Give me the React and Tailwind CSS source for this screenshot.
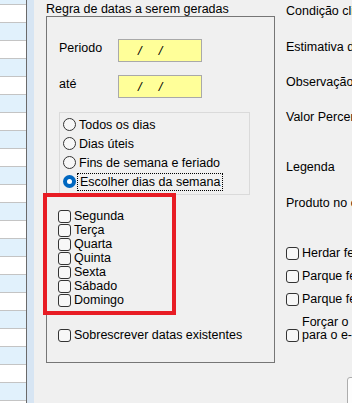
import React from "react";

function Radio({ checked }) {
  if (checked) {
    return (
      <span className="w-[13px] h-[13px] rounded-full bg-[#0067c0] flex items-center justify-center shrink-0">
        <span className="w-[5px] h-[5px] rounded-full bg-white" />
      </span>
    );
  }
  return <span className="w-[13px] h-[13px] rounded-full border border-[#333333] bg-[#f7f7f7] shrink-0" />;
}

function Check() {
  return <span className="w-[13px] h-[13px] rounded-[3px] border border-[#333333] bg-[#f7f7f7] shrink-0" />;
}

export default function App() {
  const rows = [];
  rows.push({ h: 4, blue: true });
  for (let i = 0; i < 23; i++) rows.push({ h: 17, blue: i % 2 === 1 });
  const days = ["Segunda", "Terça", "Quarta", "Quinta", "Sexta", "Sábado", "Domingo"];
  const radios = [
    ["Todos os dias", false],
    ["Dias úteis", false],
    ["Fins de semana e feriado", false],
    ["Escolher dias da semana", true],
  ];
  return (
    <div className="relative w-[352px] h-[403px] overflow-hidden flex bg-[#f0f0f0] text-black text-[12.5px] leading-[14px] font-['Liberation_Sans',Arial,sans-serif]">
      {/* left grid strip */}
      <div className="w-[26px] flex flex-col shrink-0">
        {rows.map((r, i) => (
          <div key={i} className="flex flex-col shrink-0">
            <div className={r.blue ? "bg-[#e1f1fc]" : "bg-white"} style={{ height: r.h }} />
            <div className="h-px bg-[#c4c4c4]" />
          </div>
        ))}
      </div>
      <div className="w-px bg-[#6a6a6a] shrink-0" />
      <div className="w-[7px] bg-[#d7e5f3] shrink-0" />

      {/* main panel */}
      <div className="flex pl-[12px]">
        {/* group */}
        <div className="w-[229px] shrink-0 flex flex-col">
          <div className="h-[16px] pt-[2px] whitespace-nowrap">Regra de datas a serem geradas</div>
          <div className="h-[347px] border border-[#767676] flex flex-col pl-[12px]">
            <div className="mt-[22px] h-[23px] flex items-start">
              <span className="w-[59px] mt-[2px]">Periodo</span>
              <div className="w-[84px] h-[23px] border border-[#a9a9a9] bg-[#ffff99] flex items-center text-[13px]">
                <span className="ml-[19px] italic">/</span>
                <span className="ml-[17px] italic">/</span>
              </div>
            </div>
            <div className="mt-[13px] h-[23px] flex items-start">
              <span className="w-[59px] mt-[2px]">até</span>
              <div className="w-[84px] h-[23px] border border-[#a9a9a9] bg-[#ffff99] flex items-center text-[13px]">
                <span className="ml-[19px] italic">/</span>
                <span className="ml-[17px] italic">/</span>
              </div>
            </div>
            <div className="mt-[14px] w-[191px] h-[83px] border border-[#dadada] pt-[2px] pl-[3px] flex flex-col">
              {radios.map(([label, checked]) => (
                <div key={label} className="h-[19px] flex items-center">
                  <Radio checked={checked} />
                  {checked ? (
                    <span className="ml-px px-[2px] border border-dotted border-black leading-[16px] whitespace-nowrap">{label}</span>
                  ) : (
                    <span className="ml-[3px] whitespace-nowrap">{label}</span>
                  )}
                </div>
              ))}
            </div>
            <div className="mt-[14px] flex flex-col -ml-px">
              {days.map((d) => (
                <div key={d} className="h-[14px] flex items-center">
                  <Check />
                  <span className="ml-[3px]">{d}</span>
                </div>
              ))}
            </div>
            <div className="mt-[21px] h-[14px] flex items-center -ml-px">
              <Check />
              <span className="ml-[3px] whitespace-nowrap">Sobrescrever datas existentes</span>
            </div>
          </div>
        </div>

        {/* right column */}
        <div className="w-[77px] shrink-0 pl-[11px] flex flex-col whitespace-nowrap overflow-hidden">
          <div className="mt-[4px]">Condição climática</div>
          <div className="mt-[22px]">Estimativa de</div>
          <div className="mt-[21px]">Observação</div>
          <div className="mt-[21px]">Valor Percentual</div>
          <div className="mt-[36px]">Legenda</div>
          <div className="mt-[22px]">Produto no c</div>
          <div className="mt-[36px] h-[14px] flex items-center">
            <Check />
            <span className="ml-[3px]">Herdar feriados</span>
          </div>
          <div className="mt-[9px] h-[14px] flex items-center">
            <Check />
            <span className="ml-[3px]">Parque feriado</span>
          </div>
          <div className="mt-[9px] h-[14px] flex items-center">
            <Check />
            <span className="ml-[3px]">Parque fechado</span>
          </div>
          <div className="mt-[10px] flex items-end">
            <Check />
            <div className="ml-[3px] flex flex-col">
              <span className="leading-[13px]">Forçar o uso</span>
              <span className="leading-[13px]">para o e-mail</span>
            </div>
          </div>
          <div className="mt-[35px] ml-[61px] w-[40px] h-[30px] rounded-[3px] border border-[#adadad] bg-[#fdfdfd] shrink-0" />
        </div>
      </div>

      {/* annotation */}
      <div className="absolute left-[43px] top-[193px] w-[133px] h-[122px] border-4 border-[#e81c24]" />
    </div>
  );
}
